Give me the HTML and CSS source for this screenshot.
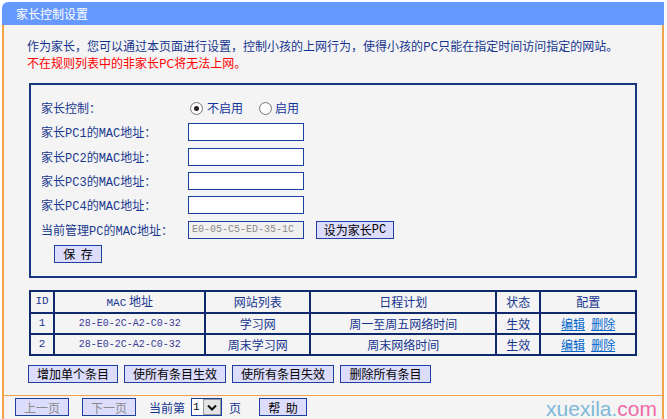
FILE: index.html
```html
<!DOCTYPE html>
<html lang="zh-CN">
<head>
<meta charset="utf-8">
<title>家长控制设置</title>
<link rel="stylesheet" href="styles.css">
</head>
<body>
<div class="panel">
  <div class="title">家长控制设置</div>
  <div class="content">
    <p class="intro">作为家长，您可以通过本页面进行设置，控制小孩的上网行为，使得小孩的PC只能在指定时间访问指定的网站。</p>
    <p class="intro warn">不在规则列表中的非家长PC将无法上网。</p>
    <div class="box">
      <div class="row">
        <span class="label">家长控制：</span>
        <span class="radios">
          <span class="radio checked"></span><span class="rtext">不启用</span>
          <span class="radio second"></span><span class="rtext">启用</span>
        </span>
      </div>
      <div class="row"><span class="label">家长<span class="mono">PC1</span>的<span class="mono">MAC</span>地址：</span><span class="input"></span></div>
      <div class="row"><span class="label">家长<span class="mono">PC2</span>的<span class="mono">MAC</span>地址：</span><span class="input"></span></div>
      <div class="row"><span class="label">家长<span class="mono">PC3</span>的<span class="mono">MAC</span>地址：</span><span class="input"></span></div>
      <div class="row"><span class="label">家长<span class="mono">PC4</span>的<span class="mono">MAC</span>地址：</span><span class="input"></span></div>
      <div class="row">
        <span class="label">当前管理<span class="mono">PC</span>的<span class="mono">MAC</span>地址：</span>
        <span class="field-group"><span class="input readonly">E0-05-C5-ED-35-1C</span><span class="btn setpc">设为家长<span class="mono">PC</span></span></span>
      </div>
      <div class="row"><span class="btn save">保&nbsp;&nbsp;存</span></div>
    </div>
    <table class="rules">
      <colgroup>
        <col class="c-id"><col class="c-mac"><col class="c-site"><col class="c-plan"><col class="c-state"><col class="c-conf">
      </colgroup>
      <tr class="head">
        <td class="mono small">ID</td><td><span class="mono small">MAC</span> 地址</td><td>网站列表</td><td>日程计划</td><td>状态</td><td>配置</td>
      </tr>
      <tr>
        <td class="mono small">1</td><td class="mono mac">28-E0-2C-A2-C0-32</td><td>学习网</td><td>周一至周五网络时间</td><td>生效</td><td><a class="link">编辑</a><a class="link gap">删除</a></td>
      </tr>
      <tr>
        <td class="mono small">2</td><td class="mono mac">28-E0-2C-A2-C0-32</td><td>周末学习网</td><td>周末网络时间</td><td>生效</td><td><a class="link">编辑</a><a class="link gap">删除</a></td>
      </tr>
    </table>
    <div class="actions">
      <span class="btn w89">增加单个条目</span>
      <span class="btn w102">使所有条目生效</span>
      <span class="btn w102">使所有条目失效</span>
      <span class="btn w90">删除所有条目</span>
    </div>
  </div>
  <div class="footer">
    <span class="btn pager disabled">上一页</span>
    <span class="btn pager disabled">下一页</span>
    <span class="page-text">当前第</span>
    <span class="select"><span class="sel-val">1</span><span class="sel-btn"><svg width="10" height="7" viewBox="0 0 10 7"><path d="M1 1.5 L5 5.5 L9 1.5" fill="none" stroke="#111" stroke-width="2"/></svg></span></span>
    <span class="page-text after">页</span>
    <span class="btn help">帮&nbsp;&nbsp;助</span>
  </div>
  <div class="watermark">xuexila.<span class="wm-com">com</span></div>
</div>
</body>
</html>
```
FILE: styles.css
```css
* { box-sizing: border-box; }

body {
  margin: 0;
  background: #ffffff;
  font-family: "Noto Sans CJK SC", "Liberation Sans", sans-serif;
  font-size: 12px;
  color: #15358f;
}

.panel {
  position: relative;
  width: 662px;
  margin: 2px 0 0 2px;
}

.title {
  height: 23px;
  line-height: 23px;
  background: #6699ff;
  color: #ffffff;
  border-top-left-radius: 6px;
  padding-left: 14px;
}

.content {
  background: #f4f4f4;
  border-left: 2px solid #f5a04a;
  border-right: 2px solid #f5a04a;
  padding: 12px 0 12px 23px;
}

.intro {
  margin: 0;
  line-height: 17px;
  color: #15358f;
}

.warn { color: #ff0000; }

.mono { font-family: "Liberation Mono", monospace; }
.small { font-size: 11px; }

.box {
  width: 608px;
  margin: 12px 0 0 2px;
  border: 2px solid #183580;
  padding: 14px 0 13px 10px;
  display: grid;
  grid-template-columns: 147px auto;
  grid-auto-rows: 18px;
  row-gap: 6.33px;
}

.row {
  display: contents;
}

.label {
  line-height: 18px;
  color: #1a3a8e;
}

.radios {
  display: flex;
  align-items: center;
  color: #10349a;
}

.radio {
  width: 13px;
  height: 13px;
  border: 1px solid #7a7a7a;
  border-radius: 50%;
  background: radial-gradient(circle, #ffffff 55%, #dcdcdc 100%);
  margin-left: 2px;
  margin-right: 4px;
  position: relative;
}

.radio.checked::after {
  content: "";
  position: absolute;
  left: 3px;
  top: 3px;
  width: 5px;
  height: 5px;
  border-radius: 50%;
  background: #2a2020;
}

.radio.second { margin-left: 16px; margin-right: 3px; }

.rtext { line-height: 18px; }

.input {
  display: block;
  width: 116px;
  height: 18px;
  border: 1px solid #1b3fa0;
  background: #ffffff;
}

.input.readonly {
  background: #f0f0f0;
  color: #8a8a8a;
  font-family: "Liberation Mono", monospace;
  font-size: 10px;
  line-height: 16px;
  padding-left: 3px;
  white-space: nowrap;
  overflow: hidden;
}

.field-group {
  display: flex;
  gap: 12px;
}

.btn {
  display: inline-flex;
  align-items: center;
  justify-content: center;
  height: 18px;
  border: 1px solid #1f40a0;
  background: #dcdcfc;
  color: #000000;
  white-space: nowrap;
}

.btn.setpc { width: 78px; }

.btn.save {
  grid-column: 1 / span 2;
  width: 48px;
  margin-left: 13px;
}

.rules {
  width: 608px;
  margin: 12px 0 0 2px;
  border-collapse: collapse;
  border: 2px solid #0f2a6c;
  text-align: center;
  color: #15358f;
}

.rules td {
  border: 2px solid #0f2a6c;
  padding: 0;
  height: 21px;
  line-height: 17px;
}

.rules tr.head td { height: 20px; }

.c-id { width: 24px; }
.c-mac { width: 152px; }
.c-site { width: 105px; }
.c-plan { width: 187px; }
.c-state { width: 44px; }
.c-conf { width: 96px; }

.mac { color: #3b3b9a; font-size: 10px; }

.link {
  color: #0066cc;
  text-decoration: underline;
}

.link.gap { margin-left: 6px; }

.actions {
  display: flex;
  gap: 6px;
  margin: 9px 0 0 1px;
}

.w89 { width: 90px; }
.w102 { width: 102px; }
.w90 { width: 91px; }

.footer {
  height: 27px;
  background: #f4f4f4;
  border: 2px solid #f5a04a;
  border-top-width: 1px;
  display: flex;
  align-items: center;
  padding: 0 0 1px 11px;
}

.pager { width: 54px; margin-right: 13px; }

.btn.disabled { color: #8a8a8a; }

.page-text { color: #15358f; margin-right: 6px; }
.page-text.after { margin: 0 18px 0 7px; }

.select {
  display: flex;
  width: 31px;
  height: 18px;
  border: 1px solid #1b3fa0;
  background: #ffffff;
}

.sel-val {
  width: 11px;
  line-height: 16px;
  color: #000000;
  font-family: "Liberation Mono", monospace;
  font-size: 11px;
  padding-left: 1px;
}

.sel-btn {
  flex: 1;
  display: flex;
  align-items: center;
  justify-content: center;
  background: #e4e4e4;
  border: 1px solid #9a9a9a;
}

.help { width: 48px; }

.watermark {
  position: absolute;
  right: 7px;
  bottom: 2px;
  font-family: "Liberation Sans", sans-serif;
  font-size: 21px;
  line-height: 22px;
  color: #7fb8da;
}

.wm-com { color: #f06aa8; }
```
